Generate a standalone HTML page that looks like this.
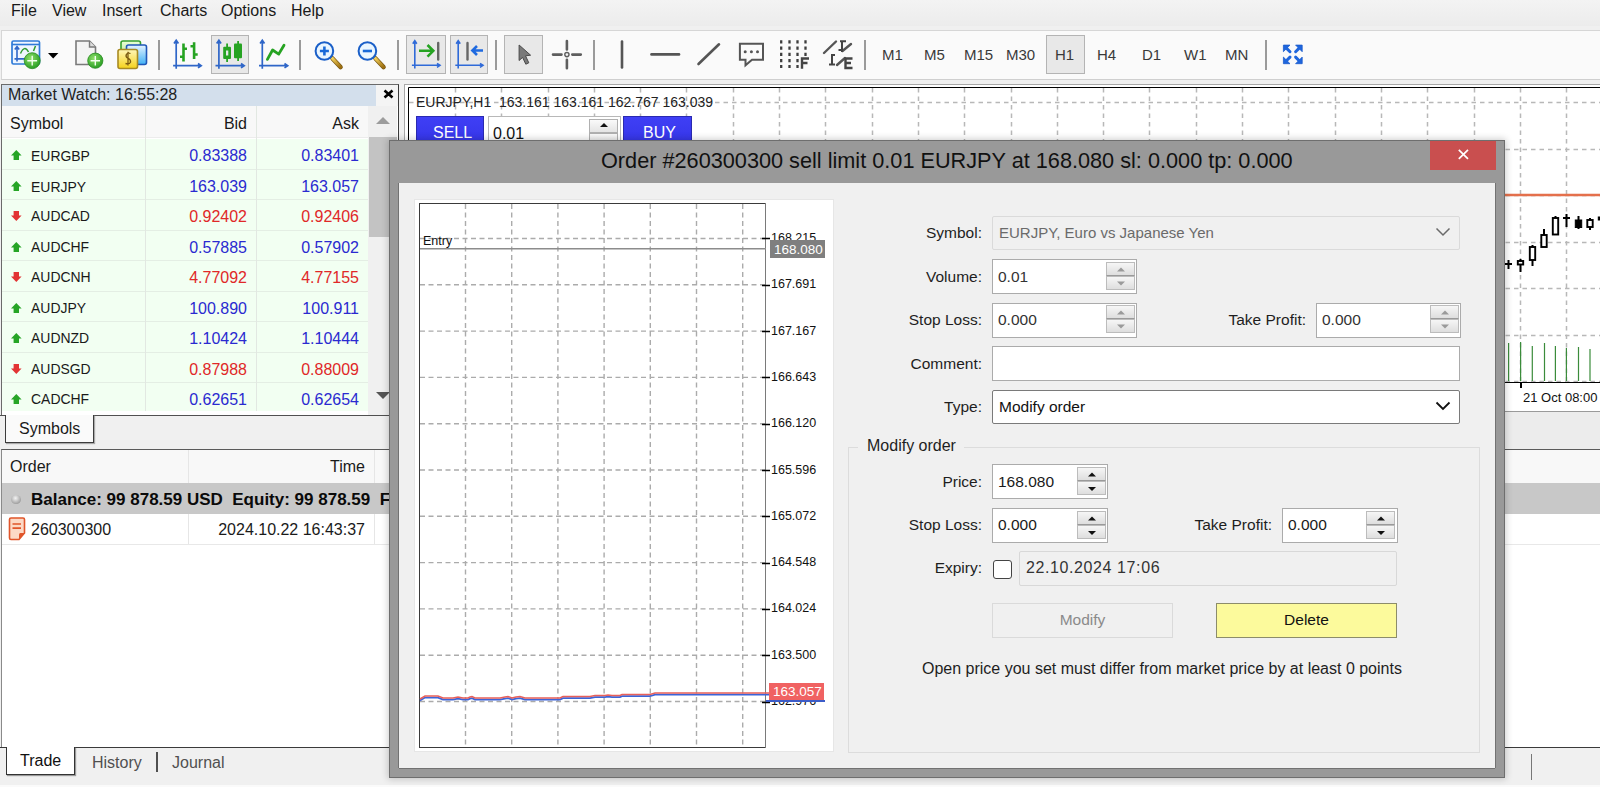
<!DOCTYPE html>
<html><head><meta charset="utf-8">
<style>
*{box-sizing:border-box;margin:0;padding:0}
html,body{width:1600px;height:787px;overflow:hidden;background:#f0f0f0;font-family:"Liberation Sans",sans-serif;color:#1a1a1a;position:relative}
.a{position:absolute}
.t{position:absolute;white-space:nowrap;line-height:1}
#menubar{left:0;top:0;width:1600px;height:26px;background:linear-gradient(#f3f3f3,#ececec)}
#menubar span{position:absolute;top:2px;font-size:16px;color:#1a1a1a}
#toolbar{left:1px;top:30px;width:1599px;height:50px;background:#fafafa;border-top:1px solid #d6d6d6;border-bottom:1px solid #cfcfcf;border-left:1px solid #d6d6d6}
.sep{position:absolute;top:40px;width:2px;height:30px;background:#9a9a9a}
.pbtn{position:absolute;top:35px;height:39px;background:#e8e8e8;border:1px solid #b4b4b4}
.tf{position:absolute;top:47px;font-size:15px;color:#3a3a3a;line-height:1}
</style></head><body>
<div id="menubar" class="a">
<span style="left:11px">File</span><span style="left:52px">View</span><span style="left:102px">Insert</span><span style="left:160px">Charts</span><span style="left:221px">Options</span><span style="left:291px">Help</span>
</div>
<div id="toolbar" class="a"></div>
<div class="sep" style="left:158px"></div>
<div class="sep" style="left:299px"></div>
<div class="sep" style="left:397px"></div>
<div class="sep" style="left:495px"></div>
<div class="sep" style="left:593px"></div>
<div class="sep" style="left:864px"></div>
<div class="sep" style="left:1265px"></div>
<div class="pbtn" style="left:211px;width:38px"></div>
<div class="pbtn" style="left:406px;width:40px"></div>
<div class="pbtn" style="left:450px;width:38px"></div>
<div class="pbtn" style="left:504px;width:39px"></div>
<div class="pbtn" style="left:1046px;width:39px"></div>
<span class="tf" style="left:882px">M1</span><span class="tf" style="left:924px">M5</span><span class="tf" style="left:964px">M15</span><span class="tf" style="left:1006px">M30</span><span class="tf" style="left:1055px">H1</span><span class="tf" style="left:1097px">H4</span><span class="tf" style="left:1142px">D1</span><span class="tf" style="left:1184px">W1</span><span class="tf" style="left:1225px">MN</span>
<!--ICONS-->
<svg class="a" style="left:0;top:30px" width="1320" height="50" viewBox="0 30 1320 50">
<defs>
<radialGradient id="gg" cx="0.4" cy="0.35" r="0.7"><stop offset="0" stop-color="#8fe06a"/><stop offset="1" stop-color="#239a1f"/></radialGradient>
<linearGradient id="yg" x1="0" y1="0" x2="0" y2="1"><stop offset="0" stop-color="#fff6b8"/><stop offset="1" stop-color="#f5d21a"/></linearGradient>
<linearGradient id="bg2" x1="0" y1="0" x2="0" y2="1"><stop offset="0" stop-color="#e6f4ff"/><stop offset="1" stop-color="#3fb0f5"/></linearGradient>
<linearGradient id="gg2" x1="0" y1="0" x2="0" y2="1"><stop offset="0" stop-color="#eaffd8"/><stop offset="1" stop-color="#b9e58e"/></linearGradient>
<linearGradient id="hg" x1="0" y1="0" x2="1" y2="1"><stop offset="0" stop-color="#f2cf5a"/><stop offset="1" stop-color="#9c6e10"/></linearGradient>
</defs>
<!-- new chart -->
<rect x="12" y="41" width="27.5" height="23" rx="1.5" fill="#eef6ff" stroke="#2f7bd8" stroke-width="1.7"/>
<path d="M12 44.5H39.5" stroke="#2f7bd8" stroke-width="1.6"/>
<path d="M17 61.5V47.5M14.8 49.5L17 46.5L19.2 49.5M14.5 58.9H26" stroke="#2f66c8" stroke-width="1.6" fill="none"/>
<path d="M20.5 53.5Q24.5 44.5 28.5 52M35.5 46L33.5 51" stroke="#2e9a2e" stroke-width="1.5" fill="none"/>
<circle cx="32.2" cy="60.7" r="8" fill="url(#gg)" stroke="#2a8a22" stroke-width="0.8"/>
<path d="M32.2 55.8V65.6M27.3 60.7H37.1" stroke="#f4fff0" stroke-width="1.4"/>
<path d="M48 53L58.4 53L53.2 58.6Z" fill="#000"/>
<!-- new doc -->
<path d="M76 41H89.5L95.5 47V64.5H76Z" fill="#f4f4f4" stroke="#7a7a7a" stroke-width="1.6"/>
<path d="M89.5 41V47H95.5" fill="#ddd" stroke="#7a7a7a" stroke-width="1.4"/>
<circle cx="95.3" cy="60.7" r="7.6" fill="url(#gg)" stroke="#2a8a22" stroke-width="0.8"/>
<path d="M95.3 56V65.4M90.6 60.7H100" stroke="#f4fff0" stroke-width="1.4"/>
<!-- market -->
<rect x="121" y="41" width="19.5" height="15" rx="2" fill="url(#gg2)" stroke="#34a02c" stroke-width="1.6"/>
<rect x="126.5" y="45" width="20" height="19.5" rx="2" fill="url(#bg2)" stroke="#1f57b8" stroke-width="1.6"/>
<rect x="118" y="49.5" width="19.5" height="19" rx="2" fill="url(#yg)" stroke="#a88a22" stroke-width="1.6"/>
<path d="M130.5 53.5Q127.5 52.5 126.3 54.5Q125.3 57 128 58.3Q131 59.5 130.5 62.3Q129.3 64.5 125.5 63.5M128 51.8V65.5" stroke="#7a5a10" stroke-width="1.3" fill="none"/>
<!-- bar chart -->
<path d="M176.2 68.7V41.5M173.1 65.7H200M174 43.5L176.2 40.3L178.4 43.5M198 63.5L201.2 65.7L198 67.9" stroke="#2f66c8" stroke-width="1.7" fill="none"/>
<path d="M183.5 43.5V61.4M180 56.8H183.5M183.5 48.8H187M194.1 42.3V59M190.5 46.2H194.1M194.1 54.5H197.7" stroke="#26a322" stroke-width="2.6" fill="none"/>
<!-- candle -->
<path d="M218.9 68.7V41.5M215.5 65.7H243M216.7 43.5L218.9 40.3L221.1 43.5M241 63.5L244.2 65.7L241 67.9" stroke="#2f66c8" stroke-width="1.7" fill="none"/>
<path d="M227.1 43.5V62M238.1 41V61" stroke="#26a322" stroke-width="1.8"/>
<rect x="223.2" y="46.8" width="7.8" height="12.2" rx="1" fill="#26a322"/>
<rect x="226" y="50.5" width="2.3" height="5" fill="#e8e8e8"/>
<rect x="234" y="43.5" width="8" height="14.7" rx="1" fill="#26a322"/>
<!-- line chart -->
<path d="M262.3 68.7V41.5M259 65.7H286.5M260.1 43.5L262.3 40.3L264.5 43.5M284.5 63.5L287.7 65.7L284.5 67.9" stroke="#2f66c8" stroke-width="1.7" fill="none"/>
<path d="M267.4 59.4L272.6 50L278.7 54.1L284 45.2" stroke="#26a322" stroke-width="2.8" fill="none" stroke-linecap="round" stroke-linejoin="round"/>
<!-- zoom in/out -->
<path d="M332.5 58.5L340.5 67" stroke="#7a5810" stroke-width="4.6" stroke-linecap="round"/>
<path d="M332.5 58.5L340.5 67" stroke="url(#hg)" stroke-width="3.2" stroke-linecap="round"/>
<circle cx="324.4" cy="51" r="8.8" fill="#eaf6ff" stroke="#1a5fc8" stroke-width="2"/>
<path d="M324.4 46.5V55.5M319.9 51H328.9" stroke="#1a6ad8" stroke-width="2.6"/>
<path d="M375.5 58.5L383.5 67" stroke="#7a5810" stroke-width="4.6" stroke-linecap="round"/>
<path d="M375.5 58.5L383.5 67" stroke="url(#hg)" stroke-width="3.2" stroke-linecap="round"/>
<circle cx="367.4" cy="51" r="8.8" fill="#eaf6ff" stroke="#1a5fc8" stroke-width="2"/>
<path d="M362.8 51H372" stroke="#1a6ad8" stroke-width="2.6"/>
<!-- autoscroll -->
<path d="M414.8 68.6V41.8M411.9 65.3H439M412.8 43.8L414.8 40.7L416.8 43.8M437 63.3L440 65.3L437 67.3" stroke="#2f6ad8" stroke-width="1.6" fill="none"/>
<path d="M419 50.8H433M427.5 45L433.3 50.8L427.5 56.6" stroke="#26a322" stroke-width="2.6" fill="none"/>
<path d="M438.2 43V59.5" stroke="#666" stroke-width="2.4" stroke-linecap="round"/>
<!-- chart shift -->
<path d="M458.2 68.6V41.8M455.3 65.3H482M456.2 43.8L458.2 40.7L460.2 43.8M480 63.3L483 65.3L480 67.3" stroke="#2f6ad8" stroke-width="1.6" fill="none"/>
<path d="M467.5 43V59.5" stroke="#666" stroke-width="2.4" stroke-linecap="round"/>
<path d="M483 50.5H473M477 46L472.4 50.5L477 55" stroke="#1f6ae0" stroke-width="2.6" fill="none"/>
<!-- cursor -->
<path d="M519.1 45L530.6 55.2L525.5 55.8L528.8 62.8L525.8 64.2L522.6 57.4L519.1 60.5Z" fill="#7a7a7a" stroke="#4a4a4a" stroke-width="1" stroke-linejoin="round"/>
<!-- crosshair -->
<path d="M566.9 41V49.5M566.9 59.7V68.3M553 54.6H561.5M572.3 54.6H580.8" stroke="#5e5e5e" stroke-width="2.6" stroke-linecap="round"/>
<circle cx="566.9" cy="54.6" r="2.1" fill="#f4f4f4" stroke="#5e5e5e" stroke-width="1.4"/>
<!-- vline hline trend -->
<path d="M622 41.5V67.5" stroke="#555" stroke-width="2.6" stroke-linecap="round"/>
<path d="M651.5 54.4H679" stroke="#555" stroke-width="2.6" stroke-linecap="round"/>
<path d="M698.5 64L719 44.3" stroke="#555" stroke-width="2.6" stroke-linecap="round"/>
<!-- comment -->
<path d="M739.9 43.7H763V59.8H752L745.5 65.3V59.8H739.9Z" fill="none" stroke="#555" stroke-width="2"/>
<circle cx="745.2" cy="51.7" r="1.5" fill="#555"/><circle cx="751.4" cy="51.7" r="1.5" fill="#555"/><circle cx="757.5" cy="51.7" r="1.5" fill="#555"/>
<!-- fibo F -->
<path d="M781.2 40.3V68M789.5 40.3V68M797.5 40.3V68" stroke="#3e3e3e" stroke-width="2.3" stroke-dasharray="3.3 2.9"/>
<path d="M805.5 40.3V56" stroke="#3e3e3e" stroke-width="2.3" stroke-dasharray="3.3 2.9"/>
<path d="M802 68.7V58.5H809M802 63H807.5" stroke="#444" stroke-width="2.4" fill="none"/>
<!-- fibo E -->
<path d="M824 53L836 41.5" stroke="#555" stroke-width="2.4" stroke-linecap="round"/>
<path d="M842.5 51L851 44M837 65L845 58" stroke="#555" stroke-width="2.4" stroke-linecap="round"/>
<path d="M842 41.5V52M840 41.2H846M838.5 50H843M832 54V65M829 64.5H835M831 55H835" stroke="#444" stroke-width="2" fill="none"/>
<path d="M852.5 58.5H845.5V68H852.5M845.5 63H851" stroke="#444" stroke-width="2.4" fill="none"/>
<!-- fullscreen -->
<path d="M1283.4 45.1H1290.0L1283.4 51.7Z M1302.2 45.1H1295.6L1302.2 51.7Z M1283.4 63.7H1290.0L1283.4 57.1Z M1302.2 63.7H1295.6L1302.2 57.1Z" fill="#1f66dd" stroke="#1a5ccc" stroke-width="0.8" stroke-linejoin="round"/>
<path d="M1285.9 47.6L1290.0 51.7 M1299.7 47.6L1295.6 51.7 M1285.9 61.2L1290.0 57.1 M1299.7 61.2L1295.6 57.1" stroke="#1f66dd" stroke-width="3" stroke-linecap="round"/>
</svg>

<!--/ICONS-->

<!--MARKETWATCH-->
<div class="a" style="left:1px;top:84px;width:398px;height:332px;border:1px solid #6a6a6a;border-right-color:#3a3a3a;border-bottom:none;background:#fff"></div>
<div class="a" style="left:2px;top:85px;width:374px;height:21px;background:#d3dfec"></div>
<div class="a" style="left:376px;top:85px;width:22px;height:21px;background:#f4f4f4"></div>
<span class="t" style="left:8px;top:87px;font-size:16px;color:#1e1e1e">Market Watch: 16:55:28</span>
<svg class="a" style="left:383px;top:89px" width="11" height="10"><path d="M1.5 1.5L9.5 8.5M9.5 1.5L1.5 8.5" stroke="#000" stroke-width="2.6"/></svg>
<div class="a" style="left:2px;top:106px;width:366px;height:32px;background:#f8f8f8;border-bottom:1px solid #ececec"></div>
<span class="t" style="left:10px;top:116px;font-size:16px">Symbol</span>
<span class="t" style="left:147px;width:100px;text-align:right;top:116.0px;font-size:16px">Bid</span>
<span class="t" style="left:258px;width:101px;text-align:right;top:116.0px;font-size:16px">Ask</span>
<div class="a" style="left:2px;top:139.0px;width:366px;height:30.5px;background:#f2fff2;border-bottom:1px solid #e4eee4"></div>
<svg class="a" style="left:11px;top:150.0px" width="11" height="10"><path d="M5.3 0L10.6 5.5H8V10H2.6V5.5H0Z" fill="#26a526"/></svg>
<span class="t" style="left:31px;top:148.0px;font-size:15px;color:#1a1a1a;font-size:15.5px;transform:scaleX(0.9);transform-origin:0 0">EURGBP</span>
<span class="t" style="left:147px;width:100px;text-align:right;top:148.0px;font-size:16px;color:#2a2ad0">0.83388</span>
<span class="t" style="left:258px;width:101px;text-align:right;top:148.0px;font-size:16px;color:#2a2ad0">0.83401</span>
<div class="a" style="left:2px;top:169.5px;width:366px;height:30.5px;background:#f2fff2;border-bottom:1px solid #e4eee4"></div>
<svg class="a" style="left:11px;top:180.5px" width="11" height="10"><path d="M5.3 0L10.6 5.5H8V10H2.6V5.5H0Z" fill="#26a526"/></svg>
<span class="t" style="left:31px;top:178.5px;font-size:15px;color:#1a1a1a;font-size:15.5px;transform:scaleX(0.9);transform-origin:0 0">EURJPY</span>
<span class="t" style="left:147px;width:100px;text-align:right;top:178.5px;font-size:16px;color:#2a2ad0">163.039</span>
<span class="t" style="left:258px;width:101px;text-align:right;top:178.5px;font-size:16px;color:#2a2ad0">163.057</span>
<div class="a" style="left:2px;top:200.0px;width:366px;height:30.5px;background:#f2fff2;border-bottom:1px solid #e4eee4"></div>
<svg class="a" style="left:11px;top:211.0px" width="11" height="10"><path d="M5.3 10L10.6 4.6H8V0H2.6V4.6H0Z" fill="#e23434"/></svg>
<span class="t" style="left:31px;top:208.0px;font-size:15px;color:#1a1a1a;font-size:15.5px;transform:scaleX(0.9);transform-origin:0 0">AUDCAD</span>
<span class="t" style="left:147px;width:100px;text-align:right;top:209.0px;font-size:16px;color:#e02828">0.92402</span>
<span class="t" style="left:258px;width:101px;text-align:right;top:209.0px;font-size:16px;color:#e02828">0.92406</span>
<div class="a" style="left:2px;top:230.5px;width:366px;height:30.5px;background:#f2fff2;border-bottom:1px solid #e4eee4"></div>
<svg class="a" style="left:11px;top:241.5px" width="11" height="10"><path d="M5.3 0L10.6 5.5H8V10H2.6V5.5H0Z" fill="#26a526"/></svg>
<span class="t" style="left:31px;top:238.5px;font-size:15px;color:#1a1a1a;font-size:15.5px;transform:scaleX(0.9);transform-origin:0 0">AUDCHF</span>
<span class="t" style="left:147px;width:100px;text-align:right;top:239.5px;font-size:16px;color:#2a2ad0">0.57885</span>
<span class="t" style="left:258px;width:101px;text-align:right;top:239.5px;font-size:16px;color:#2a2ad0">0.57902</span>
<div class="a" style="left:2px;top:261.0px;width:366px;height:30.5px;background:#f2fff2;border-bottom:1px solid #e4eee4"></div>
<svg class="a" style="left:11px;top:272.0px" width="11" height="10"><path d="M5.3 10L10.6 4.6H8V0H2.6V4.6H0Z" fill="#e23434"/></svg>
<span class="t" style="left:31px;top:269.0px;font-size:15px;color:#1a1a1a;font-size:15.5px;transform:scaleX(0.9);transform-origin:0 0">AUDCNH</span>
<span class="t" style="left:147px;width:100px;text-align:right;top:270.0px;font-size:16px;color:#e02828">4.77092</span>
<span class="t" style="left:258px;width:101px;text-align:right;top:270.0px;font-size:16px;color:#e02828">4.77155</span>
<div class="a" style="left:2px;top:291.5px;width:366px;height:30.5px;background:#f2fff2;border-bottom:1px solid #e4eee4"></div>
<svg class="a" style="left:11px;top:302.5px" width="11" height="10"><path d="M5.3 0L10.6 5.5H8V10H2.6V5.5H0Z" fill="#26a526"/></svg>
<span class="t" style="left:31px;top:299.5px;font-size:15px;color:#1a1a1a;font-size:15.5px;transform:scaleX(0.9);transform-origin:0 0">AUDJPY</span>
<span class="t" style="left:147px;width:100px;text-align:right;top:300.5px;font-size:16px;color:#2a2ad0">100.890</span>
<span class="t" style="left:258px;width:101px;text-align:right;top:300.5px;font-size:16px;color:#2a2ad0">100.911</span>
<div class="a" style="left:2px;top:322.0px;width:366px;height:30.5px;background:#f2fff2;border-bottom:1px solid #e4eee4"></div>
<svg class="a" style="left:11px;top:333.0px" width="11" height="10"><path d="M5.3 0L10.6 5.5H8V10H2.6V5.5H0Z" fill="#26a526"/></svg>
<span class="t" style="left:31px;top:330.0px;font-size:15px;color:#1a1a1a;font-size:15.5px;transform:scaleX(0.9);transform-origin:0 0">AUDNZD</span>
<span class="t" style="left:147px;width:100px;text-align:right;top:331.0px;font-size:16px;color:#2a2ad0">1.10424</span>
<span class="t" style="left:258px;width:101px;text-align:right;top:331.0px;font-size:16px;color:#2a2ad0">1.10444</span>
<div class="a" style="left:2px;top:352.5px;width:366px;height:30.5px;background:#f2fff2;border-bottom:1px solid #e4eee4"></div>
<svg class="a" style="left:11px;top:363.5px" width="11" height="10"><path d="M5.3 10L10.6 4.6H8V0H2.6V4.6H0Z" fill="#e23434"/></svg>
<span class="t" style="left:31px;top:360.5px;font-size:15px;color:#1a1a1a;font-size:15.5px;transform:scaleX(0.9);transform-origin:0 0">AUDSGD</span>
<span class="t" style="left:147px;width:100px;text-align:right;top:361.5px;font-size:16px;color:#e02828">0.87988</span>
<span class="t" style="left:258px;width:101px;text-align:right;top:361.5px;font-size:16px;color:#e02828">0.88009</span>
<div class="a" style="left:2px;top:383.0px;width:366px;height:30.5px;background:#f2fff2;border-bottom:1px solid #e4eee4"></div>
<svg class="a" style="left:11px;top:394.0px" width="11" height="10"><path d="M5.3 0L10.6 5.5H8V10H2.6V5.5H0Z" fill="#26a526"/></svg>
<span class="t" style="left:31px;top:391.0px;font-size:15px;color:#1a1a1a;font-size:15.5px;transform:scaleX(0.9);transform-origin:0 0">CADCHF</span>
<span class="t" style="left:147px;width:100px;text-align:right;top:392.0px;font-size:16px;color:#2a2ad0">0.62651</span>
<span class="t" style="left:258px;width:101px;text-align:right;top:392.0px;font-size:16px;color:#2a2ad0">0.62654</span>
<div class="a" style="left:2px;top:411px;width:366px;height:4px;background:#fff"></div>
<div class="a" style="left:145px;top:106px;width:1px;height:305px;background:#e2e8e2"></div>
<div class="a" style="left:256px;top:106px;width:1px;height:305px;background:#e2e8e2"></div>
<div class="a" style="left:368px;top:106px;width:29px;height:309px;background:#f0f0f0"></div>
<svg class="a" style="left:375px;top:116px" width="16" height="10"><path d="M1 8L8 1L15 8Z" fill="#9c9c9c"/></svg>
<div class="a" style="left:369px;top:137px;width:28px;height:100px;background:#c3c3c3"></div>
<svg class="a" style="left:375px;top:391px" width="16" height="9"><path d="M1 1L8 8L15 1Z" fill="#555"/></svg>
<div class="a" style="left:0px;top:415px;width:399px;height:35px;background:#f0f0f0;border-top:1px solid #505050"></div>
<div class="a" style="left:5px;top:415px;width:89px;height:28px;background:#fafafa;border:1px solid #3c3c3c;border-top:none;box-shadow:1px 1px 1px #aaa"></div>
<span class="t" style="left:19px;top:421px;font-size:16px;color:#1a1a1a">Symbols</span>
<!--/MARKETWATCH-->

<!--TERMINAL-->
<div class="a" style="left:1px;top:449px;width:1599px;height:299px;background:#fff;border-top:1px solid #5a5a5a;border-left:1px solid #8a8a8a"></div>
<div class="a" style="left:2px;top:450px;width:1598px;height:33px;background:#f8f8f8"></div>
<div class="a" style="left:188px;top:450px;width:1px;height:94px;background:#e6e6e6"></div>
<div class="a" style="left:374px;top:450px;width:1px;height:94px;background:#e6e6e6"></div>
<span class="t" style="left:10px;top:459px;font-size:16px">Order</span>
<span class="t" style="left:200px;width:165px;text-align:right;top:459px;font-size:16px">Time</span>
<div class="a" style="left:2px;top:483px;width:1598px;height:31px;background:#c8c8c8"></div>
<div class="a" style="left:11px;top:495px;width:10px;height:9px;border-radius:50%;background:radial-gradient(circle at 45% 35%,#f4f4f4,#a8a8a8 65%,#6e6e6e)"></div>
<span class="t" style="left:31px;top:491px;font-size:17px;font-weight:bold;color:#0a0a0a">Balance: 99 878.59 USD&nbsp; Equity: 99 878.59&nbsp; F</span>
<div class="a" style="left:2px;top:544px;width:1598px;height:1px;background:#e8e8e8"></div>
<svg class="a" style="left:7px;top:517px" width="20" height="24"><path d="M2.5 2.5Q2.5 1 4 1H16Q17.5 1 17.5 2.5V16L12 22.5H4Q2.5 22.5 2.5 21Z" fill="#fcd9c6" stroke="#e0552a" stroke-width="1.6"/><path d="M12 22.5V17.5Q12 16 13.5 16H17.5Z" fill="#e0552a"/><path d="M5.5 7H14M5.5 11.2H14" stroke="#e0552a" stroke-width="1.7"/></svg>
<span class="t" style="left:31px;top:522px;font-size:16px">260300300</span>
<span class="t" style="left:200px;width:165px;text-align:right;top:522px;font-size:16px">2024.10.22 16:43:37</span>
<div class="a" style="left:0;top:747px;width:1600px;height:38px;background:#f0f0f0;border-top:1px solid #3a3a3a"></div>
<div class="a" style="left:0;top:785px;width:1600px;height:2px;background:#fafafa"></div>
<div class="a" style="left:6px;top:747px;width:69px;height:28px;background:#fff;border:1px solid #333;border-top:none;box-shadow:1px 1px 1px #999"></div>
<span class="t" style="left:20px;top:753px;font-size:16px;color:#111">Trade</span>
<span class="t" style="left:92px;top:755px;font-size:16px;color:#505050">History</span>
<div class="a" style="left:156px;top:752px;width:2px;height:20px;background:#505050"></div>
<span class="t" style="left:172px;top:755px;font-size:16px;color:#505050">Journal</span>
<div class="a" style="left:1531px;top:754px;width:1px;height:26px;background:#777"></div>
<!--/TERMINAL-->

<!--CHART-->
<div class="a" style="left:404px;top:84px;width:1196px;height:365px;background:#ececec;border-top:1px solid #a8a8a8;border-left:1px solid #a8a8a8"></div>
<div class="a" style="left:405px;top:85px;width:1195px;height:327px;background:#fff;border-bottom:1px solid #9a9a9a"></div>
<svg class="a" style="left:404px;top:84px" width="1196" height="330" viewBox="404 84 1196 330">
<path d="M455.5 88V382 M501.5 88V382 M548.5 88V382 M594.5 88V382 M640.5 88V382 M686.5 88V382 M733.5 88V382 M779.5 88V382 M825.5 88V382 M872.5 88V382 M918.5 88V382 M964.5 88V382 M1011.5 88V382 M1057.5 88V382 M1103.5 88V382 M1149.5 88V382 M1196.5 88V382 M1242.5 88V382 M1288.5 88V382 M1335.5 88V382 M1381.5 88V382 M1427.5 88V382 M1474.5 88V382 M1520.5 88V382 M1566.5 88V382 M409 102.5H1600 M409 149.5H1600 M409 195.5H1600 M409 242.5H1600 M409 288.5H1600 M409 335.5H1600 M409 381.5H1600" stroke="#b8b8b8" stroke-width="1.5" stroke-dasharray="4.5 4" fill="none"/>
<path d="M408.5 388V87.5H1600" stroke="#000" stroke-width="1" fill="none"/>
<path d="M409 382.5H1600" stroke="#000" stroke-width="1.2" fill="none"/>
<path d="M1521 383V388" stroke="#000" stroke-width="2" fill="none"/>
<path d="M409 195H1600" stroke="#e4704c" stroke-width="2.6" fill="none"/>
<path d="M1508.5 260V269" stroke="#000" stroke-width="2"/>
<path d="M1505.0 264H1512.0" stroke="#000" stroke-width="2"/>
<path d="M1520.5 259V272" stroke="#000" stroke-width="2"/>
<rect x="1517.8" y="261" width="5.4" height="3.5" fill="#fff" stroke="#000" stroke-width="1.9"/>
<path d="M1532.5 245V266" stroke="#000" stroke-width="2"/>
<rect x="1529.8" y="247" width="5.4" height="13" fill="#fff" stroke="#000" stroke-width="1.9"/>
<path d="M1544 229V247" stroke="#000" stroke-width="2"/>
<rect x="1541.3" y="235" width="5.4" height="12" fill="#fff" stroke="#000" stroke-width="1.9"/>
<path d="M1555.5 216V234.5" stroke="#000" stroke-width="2"/>
<rect x="1552.8" y="218" width="5.4" height="16.5" fill="#fff" stroke="#000" stroke-width="1.9"/>
<path d="M1566.5 214V227" stroke="#000" stroke-width="2"/>
<path d="M1563.0 218H1570.0" stroke="#000" stroke-width="2"/>
<path d="M1578.5 216V229" stroke="#000" stroke-width="2"/>
<rect x="1575.3" y="220" width="6.4" height="7.5" fill="#000" stroke="#000" stroke-width="1"/>
<path d="M1590 218V230" stroke="#000" stroke-width="2"/>
<rect x="1587.3" y="220" width="5.4" height="7" fill="#fff" stroke="#000" stroke-width="1.9"/>
<path d="M1601.5 215V222" stroke="#000" stroke-width="2"/>
<rect x="1598.3" y="217" width="6.4" height="3" fill="#000" stroke="#000" stroke-width="1"/>
<path d="M1508.6 343V381 M1520.6 342V381 M1532.3 346V381 M1544.5 343V381 M1555.4 346V381 M1566.4 348V381 M1578.5 347V381 M1590 349V381" stroke="#3b8c3b" stroke-width="1.2"/>
</svg>
<span class="t" style="left:1523px;top:390.5px;font-size:13px;color:#111">21 Oct 08:00</span>
<span class="t" style="left:416px;top:95px;font-size:14px;color:#222">EURJPY,H1&nbsp; 163.161 163.161 162.767 163.039</span>
<div class="a" style="left:416px;top:116px;width:68px;height:30px;background:linear-gradient(#3f3ff5,#3535e8);border:1px solid #2a2ab0"></div>
<span class="t" style="left:433px;top:125px;font-size:16px;color:#fff">SELL</span>
<div class="a" style="left:488px;top:116px;width:133px;height:30px;background:#fff;border:1px solid #b8b8b8"></div>
<span class="t" style="left:493px;top:126px;font-size:16px;color:#111">0.01</span>
<div class="a" style="left:589px;top:119px;width:29px;height:14px;background:linear-gradient(#fafafa,#e4e4e4);border:1px solid #b0b0b0"></div>
<svg class="a" style="left:599px;top:122px" width="10" height="6"><path d="M1 5L5 1L9 5Z" fill="#111"/></svg>
<div class="a" style="left:589px;top:133px;width:29px;height:14px;background:linear-gradient(#fafafa,#e4e4e4);border:1px solid #b0b0b0"></div>
<div class="a" style="left:623px;top:116px;width:69px;height:30px;background:linear-gradient(#3f3ff5,#3535e8);border:1px solid #2a2ab0"></div>
<span class="t" style="left:643px;top:125px;font-size:16px;color:#fff">BUY</span>
<!--/CHART-->

<!--DIALOG-->
<div class="a" style="left:389px;top:140px;width:1116px;height:638px;background:#999;border:1px solid #6e6e6e;box-shadow:0 0 7px 1px rgba(0,0,0,0.2)"></div>
<span class="t" style="left:601px;top:150px;font-size:21.7px;color:#111">Order #260300300 sell limit 0.01 EURJPY at 168.080 sl: 0.000 tp: 0.000</span>
<div class="a" style="left:1430px;top:141px;width:66px;height:29px;background:#c94f4f"></div>
<svg class="a" style="left:1457px;top:148px" width="13" height="13"><path d="M1.8 1.8L11 10.8M11 1.8L1.8 10.8" stroke="#fff" stroke-width="1.7"/></svg>
<div class="a" style="left:399px;top:183px;width:1096px;height:585px;background:#f0f0f0;box-shadow:-1px 0 0 #727272,1px 0 0 #727272,0 1px 0 #727272"></div>
<div class="a" style="left:414px;top:199px;width:420px;height:553px;background:#fff;border:1px solid #e6e6e6"></div>
<svg class="a" style="left:414px;top:199px" width="420" height="553" viewBox="414 199 420 553">
<path d="M465.5 204V748 M511.7 204V748 M557.9 204V748 M604.1 204V748 M650.3 204V748 M696.5 204V748 M742.7 204V748 M420 238.5H766 M420 284.8H766 M420 331.1H766 M420 377.4H766 M420 423.7H766 M420 470.0H766 M420 516.3H766 M420 562.6H766 M420 608.9H766 M420 655.2H766 M420 701.5H766" stroke="#ababab" stroke-width="1.4" stroke-dasharray="5 3.5" fill="none"/>
<rect x="419.5" y="203.5" width="346" height="544" fill="none" stroke="#3a3a3a" stroke-width="1"/><path d="M765.5 203V748" stroke="#7a7a7a" stroke-width="1"/>
<path d="M762 238.5H770 M762 285.5H770 M762 331.5H770 M762 377.5H770 M762 424.5H770 M762 470.5H770 M762 516.5H770 M762 563.5H770 M762 609.5H770 M762 655.5H770 M762 702.5H770" stroke="#000" stroke-width="1.6"/>
<path d="M420 248.7H766" stroke="#8c8c8c" stroke-width="1.6"/>
<polyline points="420,700.6 425,697.6 438,697.6 443,699.6 453,699.6 458,698.6 463,699.6 468,699.6 470,698.6 472,698.1 475,699.6 500,699.6 505,698.6 508,698.1 512,699.6 516,698.6 520,698.1 525,699.6 560,699.6 563,698.1 590,698.1 595,697.1 605,697.1 608,696.6 612,697.1 620,697.1 622,696.1 650,696.1 655,694.6 770,694.6" fill="none" stroke="#3c64d8" stroke-width="1.8"/>
<polyline points="420,699 425,696 438,696 443,698 453,698 458,697 463,698 468,698 470,697 472,696.5 475,698 500,698 505,697 508,696.5 512,698 516,697 520,696.5 525,698 560,698 563,696.5 590,696.5 595,695.5 605,695.5 608,695 612,695.5 620,695.5 622,694.5 650,694.5 655,693 770,693" fill="none" stroke="#e8605a" stroke-width="1.5"/>
</svg>
<span class="t" style="left:771px;top:232.0px;font-size:12.5px;color:#111">168.215</span>
<span class="t" style="left:771px;top:278.3px;font-size:12.5px;color:#111">167.691</span>
<span class="t" style="left:771px;top:324.6px;font-size:12.5px;color:#111">167.167</span>
<span class="t" style="left:771px;top:370.9px;font-size:12.5px;color:#111">166.643</span>
<span class="t" style="left:771px;top:417.2px;font-size:12.5px;color:#111">166.120</span>
<span class="t" style="left:771px;top:463.5px;font-size:12.5px;color:#111">165.596</span>
<span class="t" style="left:771px;top:509.8px;font-size:12.5px;color:#111">165.072</span>
<span class="t" style="left:771px;top:556.1px;font-size:12.5px;color:#111">164.548</span>
<span class="t" style="left:771px;top:602.4px;font-size:12.5px;color:#111">164.024</span>
<span class="t" style="left:771px;top:648.7px;font-size:12.5px;color:#111">163.500</span>
<span class="t" style="left:771px;top:695.0px;font-size:12.5px;color:#111">162.976</span>
<span class="t" style="left:423px;top:235px;font-size:12.5px;color:#111">Entry</span>
<div class="a" style="left:770px;top:240px;width:55px;height:18px;background:#7f7f7f"></div>
<span class="t" style="left:774px;top:242.5px;font-size:13.5px;color:#fff">168.080</span>
<div class="a" style="left:766px;top:700px;width:59px;height:2px;background:#3c5cc8"></div>
<div class="a" style="left:769px;top:683px;width:55px;height:17px;background:#f06262"></div>
<span class="t" style="left:773px;top:685px;font-size:13.5px;color:#fff">163.057</span>
<span class="t" style="left:782px;width:200px;text-align:right;top:225px;font-size:15.5px;color:#1e1e1e">Symbol:</span>
<div class="a" style="left:992px;top:216px;width:468px;height:34px;background:#f0f0f0;border:1px solid #dadada;border-radius:2px"></div>
<span class="t" style="left:999px;top:225px;font-size:15px;color:#6a6a6a">EURJPY, Euro vs Japanese Yen</span>
<svg class="a" style="left:1435px;top:227px" width="16" height="10"><path d="M1.5 1.5L8 8L14.5 1.5" fill="none" stroke="#6a6a6a" stroke-width="1.5"/></svg>
<span class="t" style="left:782px;width:200px;text-align:right;top:269px;font-size:15.5px;color:#1e1e1e">Volume:</span>
<div class="a" style="left:992px;top:259px;width:145px;height:35px;background:#fff;border:1px solid #ababab"></div>
<span class="t" style="left:998px;top:268.5px;font-size:15.5px;color:#333">0.01</span>
<div class="a" style="left:1106px;top:261.5px;width:29px;height:14.0px;background:linear-gradient(#f6f6f6,#dedede);border:1px solid #bcbcbc;border-bottom-color:#9a9a9a"></div>
<div class="a" style="left:1106px;top:275.5px;width:29px;height:14.0px;background:linear-gradient(#f6f6f6,#dedede);border:1px solid #bcbcbc"></div>
<svg class="a" style="left:1114.5px;top:261.5px" width="12" height="28"><path d="M2 9.5L6 5.5L10 9.5Z M2 19.5L6 23.5L10 19.5Z" fill="#9a9a9a"/></svg>
<span class="t" style="left:782px;width:200px;text-align:right;top:312px;font-size:15.5px;color:#1e1e1e">Stop Loss:</span>
<div class="a" style="left:992px;top:302.5px;width:145px;height:35px;background:#fff;border:1px solid #ababab"></div>
<span class="t" style="left:998px;top:312.0px;font-size:15.5px;color:#333">0.000</span>
<div class="a" style="left:1106px;top:305px;width:29px;height:14.0px;background:linear-gradient(#f6f6f6,#dedede);border:1px solid #bcbcbc;border-bottom-color:#9a9a9a"></div>
<div class="a" style="left:1106px;top:319.0px;width:29px;height:14.0px;background:linear-gradient(#f6f6f6,#dedede);border:1px solid #bcbcbc"></div>
<svg class="a" style="left:1114.5px;top:305.0px" width="12" height="28"><path d="M2 9.5L6 5.5L10 9.5Z M2 19.5L6 23.5L10 19.5Z" fill="#9a9a9a"/></svg>
<span class="t" style="left:1106px;width:200px;text-align:right;top:312px;font-size:15.5px;color:#1e1e1e">Take Profit:</span>
<div class="a" style="left:1316px;top:302.5px;width:145px;height:35px;background:#fff;border:1px solid #ababab"></div>
<span class="t" style="left:1322px;top:312.0px;font-size:15.5px;color:#333">0.000</span>
<div class="a" style="left:1430px;top:305px;width:29px;height:14.0px;background:linear-gradient(#f6f6f6,#dedede);border:1px solid #bcbcbc;border-bottom-color:#9a9a9a"></div>
<div class="a" style="left:1430px;top:319.0px;width:29px;height:14.0px;background:linear-gradient(#f6f6f6,#dedede);border:1px solid #bcbcbc"></div>
<svg class="a" style="left:1438.5px;top:305.0px" width="12" height="28"><path d="M2 9.5L6 5.5L10 9.5Z M2 19.5L6 23.5L10 19.5Z" fill="#9a9a9a"/></svg>
<span class="t" style="left:782px;width:200px;text-align:right;top:356px;font-size:15.5px;color:#1e1e1e">Comment:</span>
<div class="a" style="left:992px;top:346px;width:468px;height:35px;background:#fff;border:1px solid #ababab"></div>
<span class="t" style="left:782px;width:200px;text-align:right;top:399px;font-size:15.5px;color:#1e1e1e">Type:</span>
<div class="a" style="left:992px;top:390px;width:468px;height:34px;background:#fff;border:1px solid #7a7a7a;border-radius:2px"></div>
<span class="t" style="left:999px;top:399px;font-size:15.5px;color:#111">Modify order</span>
<svg class="a" style="left:1435px;top:401px" width="16" height="10"><path d="M1.5 1.5L8 8L14.5 1.5" fill="none" stroke="#111" stroke-width="1.8"/></svg>
<div class="a" style="left:848px;top:447px;width:632px;height:306px;border:1px solid #dcdcdc"></div>
<div class="a" style="left:858px;top:437px;width:106px;height:18px;background:#f0f0f0"></div>
<span class="t" style="left:867px;top:438px;font-size:16px;color:#1e1e1e">Modify order</span>
<span class="t" style="left:782px;width:200px;text-align:right;top:474px;font-size:15.5px;color:#1e1e1e">Price:</span>
<div class="a" style="left:992px;top:464px;width:116px;height:35px;background:#fff;border:1px solid #ababab"></div>
<span class="t" style="left:998px;top:473.5px;font-size:15.5px;color:#1a1a1a">168.080</span>
<div class="a" style="left:1077px;top:467px;width:29px;height:14.2px;background:linear-gradient(#f6f6f6,#dedede);border:1px solid #bcbcbc;border-bottom-color:#9a9a9a"></div>
<div class="a" style="left:1077px;top:481.2px;width:29px;height:14.2px;background:linear-gradient(#f6f6f6,#dedede);border:1px solid #bcbcbc"></div>
<svg class="a" style="left:1085.5px;top:467.0px" width="12" height="28.5"><path d="M2 9.6L6 5.6L10 9.6Z M2 19.9L6 23.9L10 19.9Z" fill="#111"/></svg>
<span class="t" style="left:782px;width:200px;text-align:right;top:517px;font-size:15.5px;color:#1e1e1e">Stop Loss:</span>
<div class="a" style="left:992px;top:507.5px;width:116px;height:35px;background:#fff;border:1px solid #ababab"></div>
<span class="t" style="left:998px;top:517.0px;font-size:15.5px;color:#1a1a1a">0.000</span>
<div class="a" style="left:1077px;top:510.5px;width:29px;height:14.2px;background:linear-gradient(#f6f6f6,#dedede);border:1px solid #bcbcbc;border-bottom-color:#9a9a9a"></div>
<div class="a" style="left:1077px;top:524.8px;width:29px;height:14.2px;background:linear-gradient(#f6f6f6,#dedede);border:1px solid #bcbcbc"></div>
<svg class="a" style="left:1085.5px;top:510.5px" width="12" height="28.5"><path d="M2 9.6L6 5.6L10 9.6Z M2 19.9L6 23.9L10 19.9Z" fill="#111"/></svg>
<span class="t" style="left:1072px;width:200px;text-align:right;top:517px;font-size:15.5px;color:#1e1e1e">Take Profit:</span>
<div class="a" style="left:1282px;top:507.5px;width:116px;height:35px;background:#fff;border:1px solid #ababab"></div>
<span class="t" style="left:1288px;top:517.0px;font-size:15.5px;color:#1a1a1a">0.000</span>
<div class="a" style="left:1366px;top:510.5px;width:29px;height:14.2px;background:linear-gradient(#f6f6f6,#dedede);border:1px solid #bcbcbc;border-bottom-color:#9a9a9a"></div>
<div class="a" style="left:1366px;top:524.8px;width:29px;height:14.2px;background:linear-gradient(#f6f6f6,#dedede);border:1px solid #bcbcbc"></div>
<svg class="a" style="left:1374.5px;top:510.5px" width="12" height="28.5"><path d="M2 9.6L6 5.6L10 9.6Z M2 19.9L6 23.9L10 19.9Z" fill="#111"/></svg>
<span class="t" style="left:782px;width:200px;text-align:right;top:560px;font-size:15.5px;color:#1e1e1e">Expiry:</span>
<div class="a" style="left:992.5px;top:559.5px;width:19px;height:19px;background:#fff;border:1.5px solid #444;border-radius:3px"></div>
<div class="a" style="left:1019px;top:551px;width:378px;height:35px;background:#f0f0f0;border:1px solid #d8d8d8;border-radius:2px"></div>
<span class="t" style="left:1026px;top:560px;font-size:16px;letter-spacing:0.6px;color:#333">22.10.2024 17:06</span>
<div class="a" style="left:992px;top:603px;width:181px;height:35px;background:#f0f0f0;border:1px solid #dadada"></div>
<span class="t" style="left:992px;width:181px;text-align:center;top:612px;font-size:15.5px;color:#8a8a8a">Modify</span>
<div class="a" style="left:1216px;top:603px;width:181px;height:35px;background:#fcfa9c;border:1px solid #8c8c6a"></div>
<span class="t" style="left:1216px;width:181px;text-align:center;top:612px;font-size:15.5px;color:#111">Delete</span>
<span class="t" style="left:922px;top:661px;font-size:16px;color:#1e1e1e">Open price you set must differ from market price by at least 0 points</span>
<!--/DIALOG-->
</body></html>
